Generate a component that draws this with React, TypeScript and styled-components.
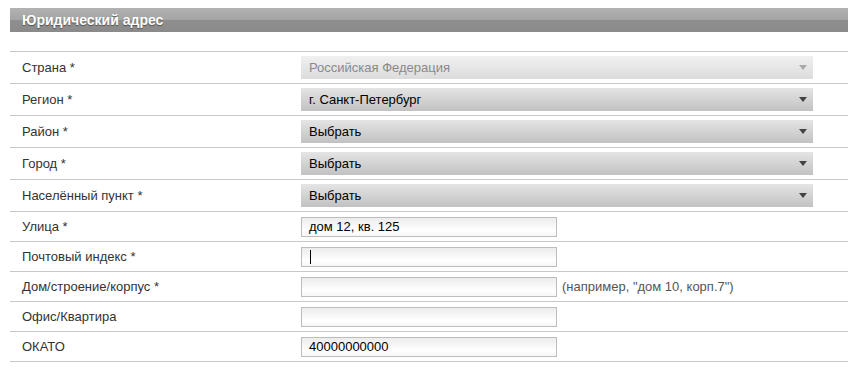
import React from "react";
import styled, { createGlobalStyle } from "styled-components";

const Global = createGlobalStyle`
  body {
    margin: 0;
    background: #fff;
    font-family: "Liberation Sans", Arial, sans-serif;
    font-size: 13px;
    color: #333;
  }
`;

interface Field {
  label: string;
  kind: "select" | "text";
  value?: string;
  disabled?: boolean;
  hint?: string;
  caret?: boolean;
}

const fields: Field[] = [
  { label: "Страна *", kind: "select", value: "Российская Федерация", disabled: true },
  { label: "Регион *", kind: "select", value: "г. Санкт-Петербург" },
  { label: "Район *", kind: "select", value: "Выбрать" },
  { label: "Город *", kind: "select", value: "Выбрать" },
  { label: "Населённый пункт *", kind: "select", value: "Выбрать" },
  { label: "Улица *", kind: "text", value: "дом 12, кв. 125" },
  { label: "Почтовый индекс *", kind: "text", caret: true },
  { label: "Дом/строение/корпус *", kind: "text", hint: '(например, "дом 10, корп.7")' },
  { label: "Офис/Квартира", kind: "text" },
  { label: "ОКАТО", kind: "text", value: "40000000000" },
];

const App: React.FC = () => {
  return (
    <>
      <Global />
      <Page>
        <Header>Юридический адрес</Header>
        <Spacer />
        <Table>
          {fields.map((f) => (
            <Row key={f.label} tall={f.kind === "select"}>
              <Label>{f.label}</Label>
              <Cell>
                {f.kind === "select" ? (
                  <SelectBox disabled={!!f.disabled}>
                    <span>{f.value}</span>
                    <Arrow disabled={!!f.disabled} />
                  </SelectBox>
                ) : (
                  <>
                    <Input>
                      {f.value}
                      {f.caret && <Caret />}
                    </Input>
                    {f.hint && <Hint>{f.hint}</Hint>}
                  </>
                )}
              </Cell>
            </Row>
          ))}
        </Table>
      </Page>
    </>
  );
};

export default App;

const Page = styled.div`
  padding: 8px 0 0 10px;
`;

const Header = styled.div`
  height: 24px;
  line-height: 24px;
  padding-left: 12px;
  font-weight: bold;
  font-size: 14px;
  color: #fff;
  text-shadow: 0 1px 1px rgba(0, 0, 0, 0.45);
  background: linear-gradient(
    to bottom,
    #b2b2b2 0%,
    #a4a4a4 50%,
    #8f8f8f 50%,
    #8a8a8a 100%
  );
`;

const Spacer = styled.div`
  height: 19px;
`;

const Table = styled.div`
  border-bottom: 1px solid #c8c8c8;
`;

const Row = styled.div<{ tall: boolean }>`
  display: grid;
  grid-template-columns: 291px 1fr;
  align-items: center;
  height: ${({ tall }) => (tall ? "31px" : "29px")};
  border-top: 1px solid #c8c8c8;
`;

const Label = styled.div`
  padding-left: 12px;
  color: #333;
`;

const Cell = styled.div`
  display: flex;
  align-items: center;
`;

const SelectBox = styled.div<{ disabled: boolean }>`
  position: relative;
  width: 512px;
  height: 23px;
  box-sizing: border-box;
  padding-left: 8px;
  display: flex;
  align-items: center;
  color: ${({ disabled }) => (disabled ? "#8a8a8a" : "#000")};
  background: ${({ disabled }) =>
    disabled
      ? "linear-gradient(to bottom, #f0f0f0, #dcdcdc)"
      : "linear-gradient(to bottom, #e4e4e4, #c2c2c2)"};
`;

const Arrow = styled.span<{ disabled: boolean }>`
  position: absolute;
  right: 6px;
  top: 9px;
  width: 0;
  height: 0;
  border-left: 4px solid transparent;
  border-right: 4px solid transparent;
  border-top: 5px solid ${({ disabled }) => (disabled ? "#a8a8a8" : "#444")};
`;

const Input = styled.div`
  width: 256px;
  height: 20px;
  box-sizing: border-box;
  border: 1px solid #bdbdbd;
  padding-left: 7px;
  display: flex;
  align-items: center;
  color: #000;
  background: linear-gradient(to bottom, #ececec, #fff 70%, #f6f6f6);
`;

const Caret = styled.span`
  display: inline-block;
  width: 1px;
  height: 14px;
  background: #000;
  margin-left: 1px;
`;

const Hint = styled.span`
  margin-left: 5px;
  color: #555;
`;
